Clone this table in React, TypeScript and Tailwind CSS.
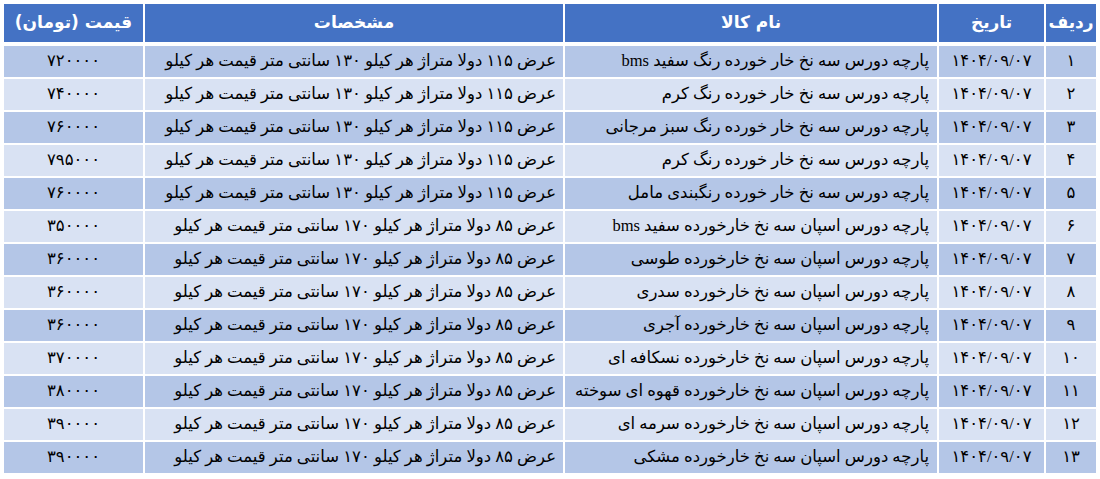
import React from "react";

type Row = { id: string; name: string; spec: string; price: string };

const spec115 = "عرض ۱۱۵ دولا متراژ هر کیلو ۱۳۰ سانتی متر قیمت هر کیلو";
const spec85 = "عرض ۸۵ دولا متراژ هر کیلو ۱۷۰ سانتی متر قیمت هر کیلو";
const date = "۱۴۰۴/۰۹/۰۷";

const rows: Row[] = [
  { id: "۱", name: "پارچه دورس سه نخ خار خورده رنگ سفید bms", spec: spec115, price: "۷۲۰۰۰۰" },
  { id: "۲", name: "پارچه دورس سه نخ خار خورده رنگ کرم", spec: spec115, price: "۷۴۰۰۰۰" },
  { id: "۳", name: "پارچه دورس سه نخ خار خورده رنگ سبز مرجانی", spec: spec115, price: "۷۶۰۰۰۰" },
  { id: "۴", name: "پارچه دورس سه نخ خار خورده رنگ کرم", spec: spec115, price: "۷۹۵۰۰۰" },
  { id: "۵", name: "پارچه دورس سه نخ خار خورده رنگبندی مامل", spec: spec115, price: "۷۶۰۰۰۰" },
  { id: "۶", name: "پارچه دورس اسپان سه نخ خارخورده سفید bms", spec: spec85, price: "۳۵۰۰۰۰" },
  { id: "۷", name: "پارچه دورس اسپان سه نخ خارخورده طوسی", spec: spec85, price: "۳۶۰۰۰۰" },
  { id: "۸", name: "پارچه دورس اسپان سه نخ خارخورده سدری", spec: spec85, price: "۳۶۰۰۰۰" },
  { id: "۹", name: "پارچه دورس اسپان سه نخ خارخورده آجری", spec: spec85, price: "۳۶۰۰۰۰" },
  { id: "۱۰", name: "پارچه دورس اسپان سه نخ خارخورده نسکافه ای", spec: spec85, price: "۳۷۰۰۰۰" },
  { id: "۱۱", name: "پارچه دورس اسپان سه نخ خارخورده قهوه ای سوخته", spec: spec85, price: "۳۸۰۰۰۰" },
  { id: "۱۲", name: "پارچه دورس اسپان سه نخ خارخورده سرمه ای", spec: spec85, price: "۳۹۰۰۰۰" },
  { id: "۱۳", name: "پارچه دورس اسپان سه نخ خارخورده مشکی", spec: spec85, price: "۳۹۰۰۰۰" },
];

const cols = "grid grid-cols-[50px_105px_372px_418px_139px] gap-x-[2px]";

const App = () => {
  return (
    <div className="bg-white w-[1100px] h-[479px] p-[4px]" dir="rtl">
      {/* header */}
      <div className={`${cols} h-[38px] mb-[4px]`}>
        {["ردیف", "تاریخ", "نام کالا", "مشخصات", "قیمت (تومان)"].map((h) => (
          <div
            key={h}
            className="bg-[#4472c4] text-white font-bold text-[17px] flex items-center justify-center font-['DejaVu_Sans',sans-serif]"
          >
            {h}
          </div>
        ))}
      </div>

      {/* body */}
      <div className="flex flex-col gap-y-[2px] font-['Liberation_Serif','DejaVu_Sans',serif] text-[16.5px] text-black">
        {rows.map((r, i) => {
          const bg = i % 2 === 0 ? "bg-[#b4c6e7]" : "bg-[#d9e2f3]";
          return (
            <div key={i} className={`${cols} h-[31px]`}>
              <div className={`${bg} flex items-center justify-center`}>{r.id}</div>
              <div className={`${bg} flex items-center justify-center`}>{date}</div>
              <div className={`${bg} flex items-center px-[8px] whitespace-nowrap overflow-hidden`}>{r.name}</div>
              <div className={`${bg} flex items-center px-[7px] whitespace-nowrap overflow-hidden`}>{r.spec}</div>
              <div className={`${bg} flex items-center justify-center`}>{r.price}</div>
            </div>
          );
        })}
      </div>
    </div>
  );
};

export default App;
